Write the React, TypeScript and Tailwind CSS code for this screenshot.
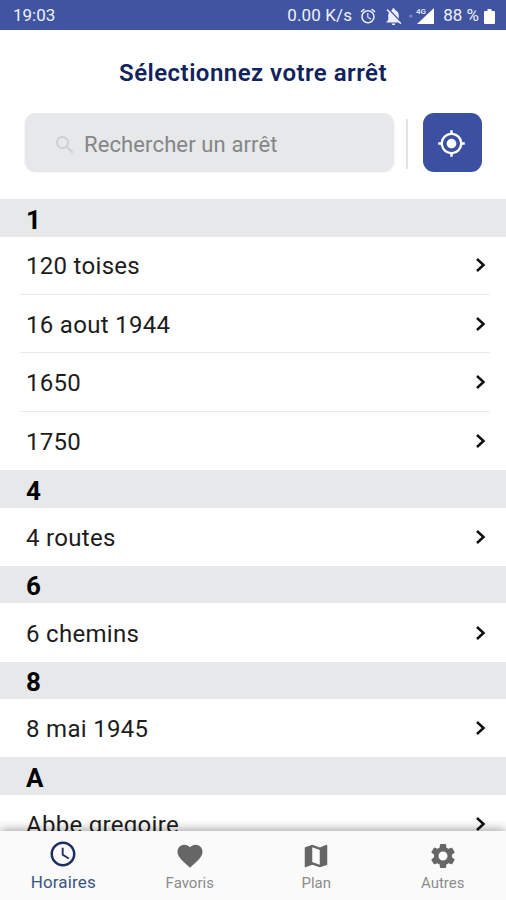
import type { ReactNode } from "react";
import {
  MdAccessTime,
  MdAlarm,
  MdFavorite,
  MdGpsFixed,
  MdNotificationsOff,
  MdSearch,
  MdSettings,
} from "react-icons/md";

const groups = [
  { letter: "1", stops: ["120 toises", "16 aout 1944", "1650", "1750"] },
  { letter: "4", stops: ["4 routes"] },
  { letter: "6", stops: ["6 chemins"] },
  { letter: "8", stops: ["8 mai 1945"] },
  { letter: "A", stops: ["Abbe gregoire"] },
];

function StatusBar() {
  return (
    <div className="flex h-[30px] shrink-0 items-center bg-[#4054a2] pl-[13px] pr-[11px] pt-[2px] text-[17px] text-[#eef1fb]">
      <span className="grow">19:03</span>
      <span className="tracking-[0.15px]">0.00 K/s</span>
      <MdAlarm className="ml-[7px] size-[18px]" />
      <MdNotificationsOff className="ml-[6px] size-[21px]" />
      <svg className="ml-[5px] h-[18px] w-[26px]" viewBox="0 0 26 18">
        <circle cx="1.8" cy="9" r="1.6" fill="#7f8dc8" />
        <path d="M25 1v16H8z" fill="#fff" />
        <text x="7" y="7" fontSize="8" fontWeight="700" fill="#d5dbf2">4G</text>
      </svg>
      <span className="ml-[8px]">88 %</span>
      <svg className="ml-[5px] h-[17px] w-[11px]" viewBox="0 0 11 17" fill="#fff">
        <path d="M3.5 1h4v2H10a1 1 0 0 1 1 1v11a1 1 0 0 1-1 1H1a1 1 0 0 1-1-1V4a1 1 0 0 1 1-1h2.500z" />
      </svg>
    </div>
  );
}

function Stop({ name, last }: { name: string; last: boolean }) {
  return (
    <div className="h-[58.4px] shrink-0 pl-[20px] pr-[16px]">
      <div className={`flex h-full items-center justify-between pl-[6px] pr-[4px] pt-[2.2px] ${last ? "" : "border-b border-[#e9eaeb]"}`}>
        <span className="text-[24px] leading-[28px] tracking-[0.3px] text-[#1d1d1d]">{name}</span>
        <svg className="-mt-[2px] h-[16px] w-[11px]" viewBox="0 0 11 16" fill="none" stroke="#111" strokeWidth="2.500">
          <path d="M2 2l6.500 6L2 14" />
        </svg>
      </div>
    </div>
  );
}

function MapIcon() {
  return (
    <svg className="size-[30px]" viewBox="0 0 24 24" fill="currentColor">
      <path d="M20.500 3l-.16.03L15 5.100 9 3 3.360 4.900c-.21.07-.36.25-.36.48V20.500c0 .28.22.5.5.5l.16-.03L9 18.900l6 2.100 5.640-1.900c.21-.07.36-.25.36-.48V3.500c0-.28-.22-.5-.5-.5zM15 19l-6-2.110V5l6 2.110V19z" />
    </svg>
  );
}

function Tab({ icon, label, active = false }: { icon: ReactNode; label: string; active?: boolean }) {
  return (
    <div className={`flex flex-1 flex-col items-center ${active ? "pt-[8px] text-[#1c2f63]" : "pt-[10px] text-[#666]"}`}>
      {icon}
      <span className={active ? "mt-[2px] text-[17px] leading-[22px] tracking-[0.15px] text-[#3a567d]" : "mt-[2px] text-[15px] leading-[20px] text-[#8c8c8c]"}>
        {label}
      </span>
    </div>
  );
}

export default function App() {
  return (
    <div className="flex h-[900px] w-[506px] flex-col overflow-hidden bg-white font-['Roboto',sans-serif]">
      <StatusBar />
      <h1 className="mt-[28px] shrink-0 text-center text-[24px] leading-[30px] font-semibold tracking-[0.47px] text-[#10235c]">
        Sélectionnez votre arrêt
      </h1>
      <div className="mt-[25px] flex h-[59px] shrink-0 items-start pl-[25px]">
        <div className="flex h-[58px] w-[369px] items-center rounded-[11px] bg-[#e6e8e9] pl-[28px] pt-[5px] shadow-[0_1px_2px_#00000022]">
          <MdSearch className="size-[24px] text-[#cdcfd0]" />
          <span className="ml-[7px] text-[22px] tracking-[0.12px] text-[#848688]">Rechercher un arrêt</span>
        </div>
        <div className="ml-[12px] mt-[6px] h-[50px] w-[2px] bg-[#e3e4e6]" />
        <button className="ml-[15px] flex h-[59px] w-[59px] items-center justify-center rounded-[11px] bg-[#3c50a2] pt-[1px] pr-[2px] text-white">
          <MdGpsFixed className="size-[29px]" />
        </button>
      </div>
      <div className="mt-[27.4px] flex min-h-0 grow flex-col overflow-hidden">
        {groups.map((g) => (
          <div key={g.letter} className="shrink-0">
            <div className="flex h-[37.3px] items-center bg-[#e6e8e9] pl-[26px] pt-[4.3px] text-[26px] font-bold text-black">
              {g.letter}
            </div>
            {g.stops.map((s, i) => (
              <Stop key={s} name={s} last={i === g.stops.length - 1} />
            ))}
          </div>
        ))}
      </div>
      <nav className="relative flex h-[69px] shrink-0 bg-[#fafafa] shadow-[0_-1px_10px_#00000066]">
        <Tab active icon={<MdAccessTime className="size-[30px]" />} label="Horaires" />
        <Tab icon={<MdFavorite className="size-[30px]" />} label="Favoris" />
        <Tab icon={<MapIcon />} label="Plan" />
        <Tab icon={<MdSettings className="size-[30px]" />} label="Autres" />
      </nav>
    </div>
  );
}
